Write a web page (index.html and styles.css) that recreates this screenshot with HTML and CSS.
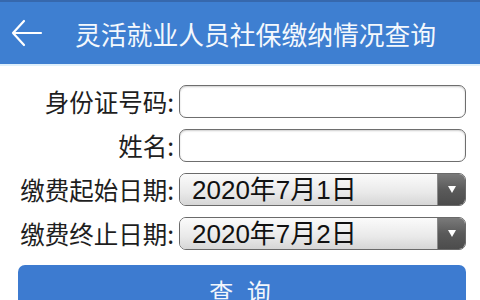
FILE: index.html
```html
<!DOCTYPE html>
<html lang="zh-CN">
<head>
  <meta charset="UTF-8">
  <meta name="viewport" content="width=device-width, initial-scale=1.0">
  <title>灵活就业人员社保缴纳情况查询</title>
  <link rel="stylesheet" href="styles.css">
</head>
<body>
  <div class="header">
    <span class="back">
      <svg width="32" height="32" viewBox="0 0 32 32">
        <path d="M30 16H2M13 4L2 16l11 12" fill="none" stroke="#fff" stroke-width="2.2" stroke-linecap="round" stroke-linejoin="round"/>
      </svg>
    </span>
    <h1>灵活就业人员社保缴纳情况查询</h1>
  </div>

  <form class="query-form" onsubmit="return false">
    <label for="idcard">身份证号码:</label>
    <input type="text" id="idcard">

    <label for="name">姓名:</label>
    <input type="text" id="name">

    <label for="start">缴费起始日期:</label>
    <div class="select">
      <select id="start">
        <option>2020年7月1日</option>
      </select>
      <span class="arrow"></span>
    </div>

    <label for="end">缴费终止日期:</label>
    <div class="select">
      <select id="end">
        <option>2020年7月2日</option>
      </select>
      <span class="arrow"></span>
    </div>

    <button class="query-btn" type="submit">查 询</button>
  </form>
</body>
</html>
```

FILE: styles.css
```css
body {
  margin: 0;
  background-color: #fff;
  font-family: "Liberation Sans", "Noto Sans CJK SC", sans-serif;
  color: #1e1e1e;
}

.header {
  display: flex;
  align-items: center;
  height: 62px;
  background-color: #3e7fd1;
  border-top: 2px solid #3668ad;
  border-bottom: 2px solid #dff0fb;
}

.back {
  display: flex;
  width: 32px;
  margin-left: 11px;
}

.header h1 {
  margin: 0 0 0 32px;
  font-family: "Noto Sans CJK SC", sans-serif;
  font-size: 25.8px;
  font-weight: normal;
  color: #f4f8fd;
}

.query-form {
  display: grid;
  grid-template-columns: 1fr 287px;
  column-gap: 5px;
  row-gap: 11px;
  padding: 19px 14px 0 0;
}

.query-form label {
  text-align: right;
  font-family: "Noto Sans CJK SC", sans-serif;
  font-size: 24.5px;
  line-height: 33px;
  color: #1e1e1e;
}

.query-form input {
  box-sizing: border-box;
  height: 33px;
  margin: 0;
  border: 1.5px solid #6e6e6e;
  border-radius: 7px;
  box-shadow: inset 0 1px 2px rgba(0, 0, 0, 0.2);
  background-color: #fff;
}

.select {
  display: flex;
  box-sizing: border-box;
  height: 33px;
  border: 1.5px solid #6a6a6a;
  border-radius: 7px;
  overflow: hidden;
}

.select select {
  flex: 1;
  min-width: 0;
  margin: 0;
  padding: 0 0 0 12px;
  border: none;
  appearance: none;
  -webkit-appearance: none;
  background: linear-gradient(#fbfbfb, #e9e9e9 60%, #d6d6d6);
  font-family: "Liberation Sans", "Noto Sans CJK SC", sans-serif;
  font-size: 26px;
  color: #111;
  outline: none;
}

.arrow {
  display: flex;
  align-items: center;
  justify-content: center;
  width: 27px;
  border-left: 1px solid #8a8a8a;
  background: linear-gradient(#7a7a7a, #5a5a5a 50%, #4c4c4c);
}

.arrow::after {
  content: "";
  border-left: 4px solid transparent;
  border-right: 4px solid transparent;
  border-top: 7px solid #fff;
}

.query-btn {
  grid-column: 1 / -1;
  height: 50px;
  margin: 4px 0 0 18px;
  border: none;
  border-radius: 7px;
  background-color: #3d7bd0;
  font-family: "Noto Sans CJK SC", sans-serif;
  font-size: 24px;
  color: #f2f6fc;
  letter-spacing: 4px;
  cursor: pointer;
}
```
